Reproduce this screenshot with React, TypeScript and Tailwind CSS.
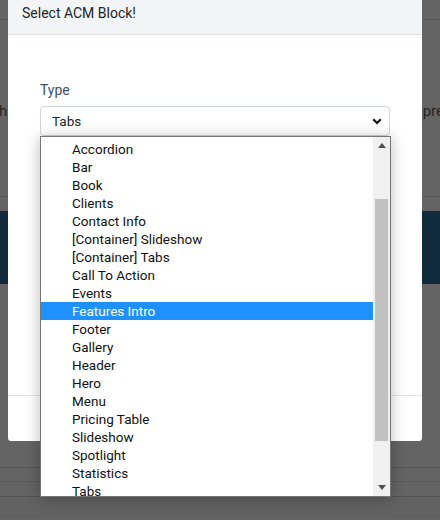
import React from "react";

const options = [
  "Accordion",
  "Bar",
  "Book",
  "Clients",
  "Contact Info",
  "[Container] Slideshow",
  "[Container] Tabs",
  "Call To Action",
  "Events",
  "Features Intro",
  "Footer",
  "Gallery",
  "Header",
  "Hero",
  "Menu",
  "Pricing Table",
  "Slideshow",
  "Spotlight",
  "Statistics",
  "Tabs",
];

const SELECTED = "Features Intro";

export default function App() {
  return (
    <div className="relative w-[440px] h-[520px] overflow-hidden bg-[#646464] font-['Roboto',sans-serif]">
      {/* dimmed page behind the modal */}
      <div className="flex flex-col w-full">
        <div className="h-[19px]"></div>
        <div className="h-px bg-[#575757]"></div>
        <div className="h-[84px]"></div>
        <div className="flex justify-between items-center h-[14px] text-[15px] leading-[14px] text-[#262626]">
          <span className="-ml-[1px]">h</span>
          <span className="-mr-[4px]">pre</span>
        </div>
        <div className="h-[78px]"></div>
        <div className="h-px bg-[#575757]"></div>
        <div className="h-[14px]"></div>
        <div className="h-[73px] bg-[#112b3c]"></div>
        <div className="h-[183px]"></div>
        <div className="h-px bg-[#4e566a]"></div>
        <div className="h-[13px]"></div>
        <div className="h-px bg-[#5a5a5a]"></div>
        <div className="h-[14px]"></div>
        <div className="h-px bg-[#545454]"></div>
        <div className="h-[22px] bg-[#626262]"></div>
      </div>

      {/* modal */}
      <div className="absolute left-[8px] top-0 w-[414px] h-[441px] bg-white rounded-b-[3px] flex flex-col">
        <div className="h-[35px] bg-[#f3f4f6] border-b border-[#dfe1e4] pl-[14px] pt-[3px] text-[14px] leading-[20px] text-[#212529]">
          Select ACM Block!
        </div>
        <div className="flex-1 px-[32px] pt-[45px]">
          <div className="text-[14px] leading-[20px] text-[#3e4e6c]">Type</div>
          <div className="mt-[6px] h-[30px] border border-[#ced4da] rounded-[4px] flex items-center justify-between pl-[11px] pr-[7px] text-[13.5px] text-[#212529]">
            <span>Tabs</span>
            <svg width="10" height="7" viewBox="0 0 10 7">
              <polyline points="1.2,1.2 5,5 8.8,1.2" fill="none" stroke="#111" strokeWidth="2.2" />
            </svg>
          </div>
        </div>
        <div className="h-[46px] border-t border-[#e4e4e4]"></div>
      </div>

      {/* open select list */}
      <div className="absolute left-[40px] top-[136px] w-[351px] h-[361px] bg-white border border-[#767676] shadow-[0_2px_14px_rgba(0,0,0,0.28)] flex">
        <div className="flex-1 overflow-hidden">
          <div className="-mt-[15px] flex flex-col">
            <div className="h-[18px] pl-[31px] text-[13.5px] leading-[13px] text-[#111]">
              Layout Component
            </div>
            {options.map((opt) => (
              <div
                key={opt}
                className={
                  opt === SELECTED
                    ? "h-[18px] pl-[31px] text-[13.5px] leading-[18px] bg-[#1e90ff] text-white"
                    : "h-[18px] pl-[31px] text-[13.5px] leading-[18px] text-[#111]"
                }
              >
                {opt}
              </div>
            ))}
          </div>
        </div>
        <div className="w-[17px] bg-[#f0f0f0] flex flex-col items-center">
          <div className="h-[17px] flex items-center justify-center">
            <svg width="8" height="5" viewBox="0 0 8 5">
              <polygon points="0,5 8,5 4,0" fill="#505050" />
            </svg>
          </div>
          <div className="mt-[45px] w-[13px] h-[242px] bg-[#c1c1c1]"></div>
          <div className="flex-1"></div>
          <div className="h-[17px] flex items-center justify-center">
            <svg width="8" height="5" viewBox="0 0 8 5">
              <polygon points="0,0 8,0 4,5" fill="#505050" />
            </svg>
          </div>
        </div>
      </div>
    </div>
  );
}
